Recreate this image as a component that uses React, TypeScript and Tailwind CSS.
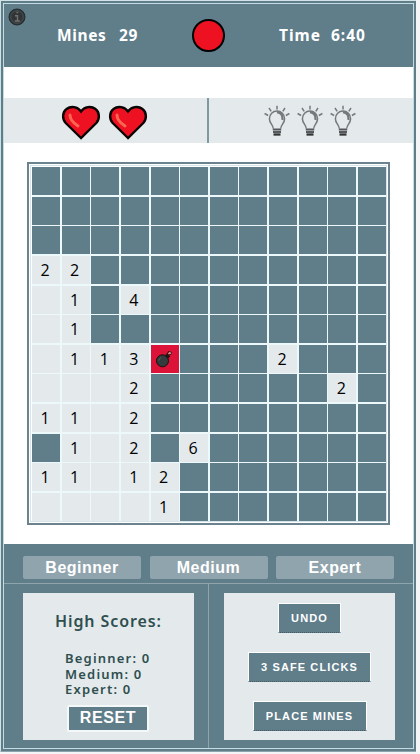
import React from 'react';

// '#' covered, '.' opened and empty, '*' detonated mine, digits are neighbour counts
const rows = [
  '############',
  '############',
  '############',
  '22##########',
  '.1#4########',
  '.1##########',
  '.113*###2###',
  '...2######2#',
  '11.2########',
  '#1.2#6######',
  '11.12#######',
  '....1#######',
];

function Heart() {
  return (
    <svg width="40" height="36" viewBox="0 0 40 36">
      <path
        d="M20 33 L4.700 18 C1 14 1.300 7 5.500 4 C10 .6 16.500 1.500 20 6.500 C23.500 1.500 30 .6 34.500 4 C38.700 7 39 14 35.300 18 Z"
        fill="#ee1122"
        stroke="#0b0504"
        strokeWidth="2.400"
        strokeLinejoin="miter"
      />
      <path d="M9 10 C9 15 13 18.500 17 21" fill="none" stroke="#fa6650" strokeWidth="3" strokeLinecap="round" />
    </svg>
  );
}

function Bulb() {
  return (
    <svg width="26" height="32" viewBox="0 0 26 32" fill="none" stroke="#75797b">
      <path d="M9.200 23.500 C9.200 19.500 5.400 18.500 5.400 13.700 A7.600 7.600 0 0 1 20.600 13.700 C20.600 18.500 16.800 19.500 16.800 23.500" strokeWidth="1.500" />
      <path d="M13 7 C17 7.500 19 10.500 18.500 15" strokeWidth="2.300" />
      <path d="M13 .8V4.600M5 3l2.200 3.300M21 3l-2.200 3.300M.6 8.500l3.500 2M25.400 8.500l-3.500 2" strokeWidth="1.500" />
      <path d="M8.800 24.500H17.200M9 27H17" stroke="#55595b" strokeWidth="2" />
      <path d="M9.500 29.500H16.500" stroke="#333" strokeWidth="2.300" />
    </svg>
  );
}

function Bomb() {
  return (
    <svg width="18" height="18" viewBox="0 0 18 18">
      <circle cx="7.500" cy="10.800" r="6" fill="#343b3c" stroke="#171010" />
      <path d="M11 4.500l3 3" stroke="#1c1515" strokeWidth="3.500" />
      <path d="M12.500 5.500L14 2.800L16.500 3.500" fill="none" stroke="#351214" strokeWidth="3" />
      <path d="M13.500 4.200L14.500 2.800L16 3.300" fill="none" stroke="#f5a39b" strokeWidth="1.300" />
      <path d="M4 10.500a4 4 0 0 1 2-3" fill="none" stroke="#586160" />
    </svg>
  );
}

function Cell({ value }: { value: string }) {
  const tone = value === '#' ? 'bg-[#607d8a]' : value === '*' ? 'bg-[#dc1238]' : 'bg-[#e4e9ec]';
  return (
    <div className={`flex items-center justify-center pr-[2px] font-['Open_Sans',sans-serif] text-[16px] leading-none text-black ${tone}`}>
      {value === '*' ? <Bomb /> : /\d/.test(value) ? value : null}
    </div>
  );
}

function Level({ children }: { children: React.ReactNode }) {
  return (
    <button className="h-[23px] w-[118px] rounded-[2px] bg-[#90a4ae] font-['Liberation_Sans',sans-serif] text-[16px] leading-[23px] font-bold tracking-[0.5px] text-white">
      {children}
    </button>
  );
}

function Action({ size, children }: { size: string; children: React.ReactNode }) {
  return (
    <button
      className={`border border-white border-b-[#455a64] bg-[#607d8a] font-['Liberation_Sans',sans-serif] text-[11px] leading-none font-bold tracking-[1.1px] text-white [border-bottom-style:dotted] ${size}`}
    >
      {children}
    </button>
  );
}

export default function App() {
  return (
    <div className="h-[754px] w-[420px] overflow-hidden bg-[#f3f5f6] font-['Noto_Sans',sans-serif]">
      <div className="h-[752px] w-[416px] border border-r-0 border-[#d0e2e6] border-b-[#90a4ae]">
        <div className="flex h-[750px] flex-col border-2 border-[#607d8a]">
          <div className="flex h-[746px] flex-col border border-[#c4dbe1] bg-white">
            <header className="flex h-[63px] shrink-0 bg-[#607d8a] text-[15.500px] font-bold text-white">
              <div className="w-[53px] pt-[4px] pl-[4px]">
                <svg width="18" height="18" viewBox="0 0 18 18">
                  <circle cx="9" cy="9" r="8" fill="#303638" stroke="#222b2e" />
                  <circle cx="9" cy="9" r="6.300" fill="none" stroke="#555b5d" strokeWidth=".7" />
                  <path d="M7 7.700h2.500v5M6.800 13h5M8.500 4.500h1.700" stroke="#74706e" strokeWidth="1.400" fill="none" />
                </svg>
              </div>
              <div className="w-[135px] pt-[20px] leading-[22px] tracking-[0.6px] whitespace-pre [word-spacing:1.700px]">Mines  29</div>
              <div className="mt-[15px] h-[33px] w-[33px] rounded-full border-2 border-black bg-[#ee1122]" />
              <div className="ml-[54px] pt-[20px] leading-[22px] tracking-[1px] whitespace-pre">Time  6:40</div>
            </header>

            <section className="mt-[31px] flex h-[45px] shrink-0 bg-[#e4e9ec]">
              <div className="flex w-[205px] gap-[7px] border-r-2 border-[#7f99a4] pt-[7px] pl-[57px]">
                <Heart />
                <Heart />
              </div>
              <div className="flex gap-[7px] pt-[7px] pl-[55px]">
                <Bulb />
                <Bulb />
                <Bulb />
              </div>
            </section>

            <main className="mt-[19px] ml-[23px] h-[363px] w-[363px] shrink-0 border-2 border-[#6b838e] p-[1px]">
              <div className="h-[357px] w-[357px] border border-[#d5e5ea] p-[1px]">
                <div className="grid h-[354px] w-[354px] grid-cols-12 grid-rows-12 gap-[1.7px] bg-[#edf8fb]">
                  {rows.flatMap((row, y) => row.split('').map((value, x) => <Cell key={`${y}-${x}`} value={value} />))}
                </div>
              </div>
            </main>

            <footer className="mt-[19px] flex grow flex-col bg-[#607d8a]">
              <nav className="flex h-[40px] gap-[8.500px] border-b border-[#90a4ae] pt-[12px] pl-[19px]">
                <Level>Beginner</Level>
                <Level>Medium</Level>
                <Level>Expert</Level>
              </nav>
              <div className="flex grow">
                <div className="w-[205px] border-r border-[#90a4ae] pt-[9px] pl-[19px]">
                  <section className="flex h-[147px] w-[171px] flex-col bg-[#e4e9ec] text-[#2f4f4f]">
                    <h2 className="mt-[16px] ml-[32px] text-[16px] leading-[24px] font-semibold tracking-[0.9px]">High Scores:</h2>
                    <p className="mt-[18px] ml-[42px] text-[13px] leading-[15.500px] font-semibold tracking-[1.2px]">
                      Beginner: 0
                      <br />
                      Medium: 0
                      <br />
                      Expert: 0
                    </p>
                    <button className="mt-[7px] ml-[44px] h-[27px] w-[82px] rounded-[2px] border-2 border-[#f5f8f9] bg-[#607d8a] pb-[1px] font-['Liberation_Sans',sans-serif] text-[16px] leading-none font-bold tracking-[0.6px] text-white">
                      RESET
                    </button>
                  </section>
                </div>
                <div className="pt-[9px] pl-[15px]">
                  <section className="flex h-[147px] w-[171px] flex-col items-center bg-[#e4e9ec] pt-[10px]">
                    <Action size="h-[30px] w-[63px]">UNDO</Action>
                    <Action size="mt-[19px] h-[30px] w-[123px]">3 SAFE CLICKS</Action>
                    <Action size="mt-[19px] h-[30px] w-[114px]">PLACE MINES</Action>
                  </section>
                </div>
              </div>
            </footer>
          </div>
        </div>
      </div>
    </div>
  );
}
